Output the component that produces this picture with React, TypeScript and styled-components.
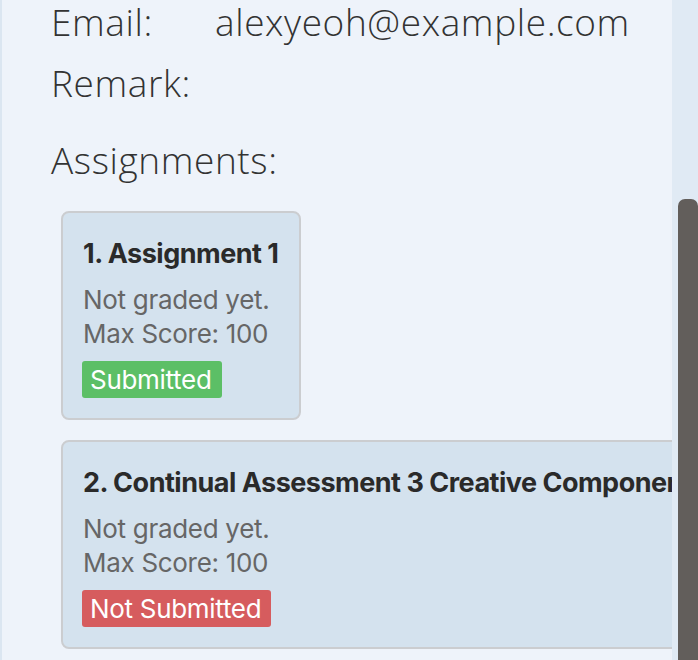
import styled, { createGlobalStyle } from "styled-components";

const GlobalStyle = createGlobalStyle`
  html, body {
    margin: 0;
    padding: 0;
    overflow: hidden;
  }
  body {
    font-family: "Open Sans", "Liberation Sans", sans-serif;
  }
`;

const Window = styled.div`
  display: flex;
  height: 660px;
  width: 698px;
  background: #eef3fa;
  overflow: hidden;
`;

const LeftEdge = styled.div`
  width: 2px;
  background: #dbe6f1;
`;

const Content = styled.div`
  flex: 1;
  min-width: 0;
  overflow: hidden;
  padding-left: 49px;
`;

const Info = styled.div`
  display: flex;
  flex-direction: column;
  gap: 17px;
`;

const InfoRow = styled.div`
  display: flex;
  font-weight: 300;
  font-size: 37px;
  line-height: 44px;
  letter-spacing: 0.6px;
  color: #333333;
`;

const Label = styled.span`
  width: 164px;
  flex-shrink: 0;
`;

const Value = styled.span`
  white-space: nowrap;
`;

const SectionTitle = styled.div`
  font-weight: 300;
  font-size: 37px;
  line-height: 44px;
  letter-spacing: 0.6px;
  color: #333333;
  margin-top: 33px;
`;

const CardList = styled.div`
  display: flex;
  flex-direction: column;
  align-items: flex-start;
  gap: 20px;
  padding-left: 10px;
  margin-top: 29px;
`;

const Card = styled.div`
  flex-shrink: 0;
  box-sizing: border-box;
  width: max-content;
  padding: 25px 20px 20px;
  background: #d4e2ee;
  border: 2px solid #cbcdd0;
  border-radius: 8px;
  font-family: Inter, "Liberation Sans", sans-serif;
`;

const CardTitle = styled.div`
  font-weight: 700;
  font-size: 27px;
  line-height: 32px;
  letter-spacing: -0.5px;
  color: #2a2a2a;
  white-space: nowrap;
  margin-bottom: 13px;
`;

const CardLine = styled.div`
  font-size: 26px;
  line-height: 34px;
  letter-spacing: -0.3px;
  color: #666666;
`;

const Badge = styled.span<{ $ok: boolean }>`
  display: inline-block;
  margin-top: 10px;
  margin-left: -1px;
  padding: 0 10px 0 8px;
  font-size: 26px;
  line-height: 37px;
  letter-spacing: -0.3px;
  color: #ffffff;
  border-radius: 3px;
  background: ${(p) => (p.$ok ? "#5cbf66" : "#d65c5e")};
`;

const ScrollTrack = styled.div`
  width: 26px;
  flex-shrink: 0;
  display: flex;
  flex-direction: column;
  padding: 199px 0 0 6px;
  box-sizing: border-box;
  background: #e0eaf4;
`;

const Thumb = styled.div`
  flex: 1;
  background: #625e5b;
  border-radius: 7px 7px 0 0;
`;

interface IAssignment {
  id: number;
  name: string;
  maxScore: number;
  submitted: boolean;
}

const assignments: IAssignment[] = [
  { id: 1, name: "Assignment 1", maxScore: 100, submitted: true },
  {
    id: 2,
    name: "Continual Assessment 3 Creative Component",
    maxScore: 100,
    submitted: false,
  },
];

function App() {
  return (
    <>
      <GlobalStyle />
      <Window>
        <LeftEdge />
        <Content>
          <Info>
            <InfoRow>
              <Label>Email:</Label>
              <Value>alexyeoh@example.com</Value>
            </InfoRow>
            <InfoRow>
              <Label>Remark:</Label>
              <Value></Value>
            </InfoRow>
          </Info>
          <SectionTitle>Assignments:</SectionTitle>
          <CardList>
            {assignments.map((a) => (
              <Card key={a.id}>
                <CardTitle>
                  {a.id}. {a.name}
                </CardTitle>
                <CardLine>Not graded yet.</CardLine>
                <CardLine>Max Score: {a.maxScore}</CardLine>
                <Badge $ok={a.submitted}>
                  {a.submitted ? "Submitted" : "Not Submitted"}
                </Badge>
              </Card>
            ))}
          </CardList>
        </Content>
        <ScrollTrack>
          <Thumb />
        </ScrollTrack>
      </Window>
    </>
  );
}

export default App;
